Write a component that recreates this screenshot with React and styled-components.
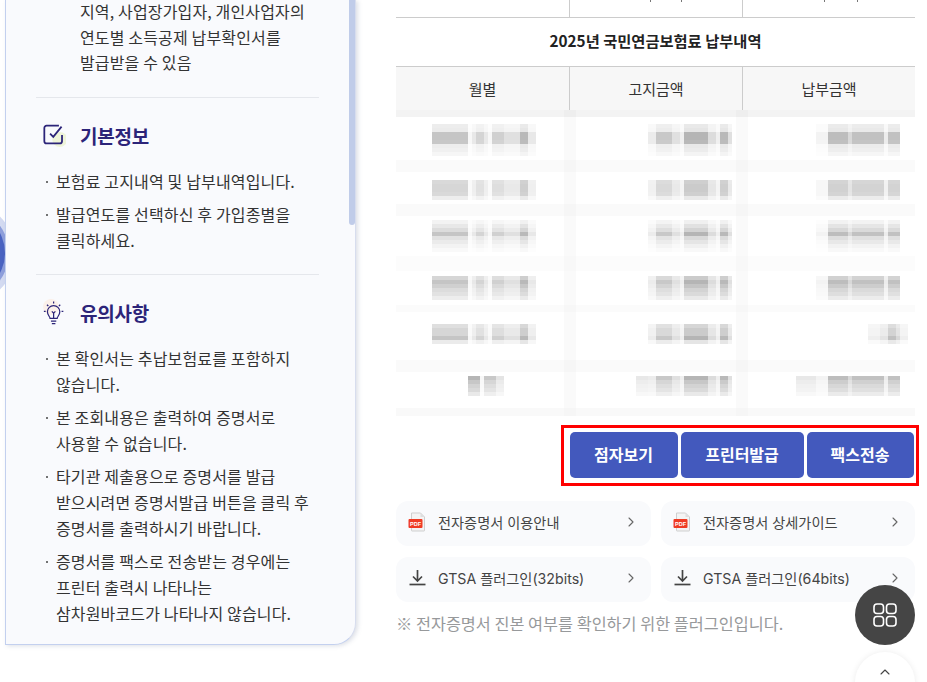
import React from "react";
import styled, { createGlobalStyle } from "styled-components";
import { ChevronRight, ChevronUp } from "lucide-react";

const GlobalStyle = createGlobalStyle`
  html, body {
    margin: 0;
    padding: 0;
    background: #fff;
  }
  body {
    font-family: "Noto Sans CJK KR", "Noto Sans", sans-serif;
    color: #333;
  }
`;

const Page = styled.div`
  position: relative;
  width: 927px;
  height: 682px;
  overflow: hidden;
  display: flex;
  align-items: flex-start;
  background: #fff;
`;

const Halo = styled.div`
  position: absolute;
  left: -79px;
  top: 211px;
  width: 84px;
  height: 84px;
  border-radius: 50%;
  background: #4a63c1;
  box-shadow: 0 0 0 4px #8d9edb, 0 0 0 10px #d3daf1;
`;

const Panel = styled.aside`
  position: relative;
  z-index: 1;
  box-sizing: border-box;
  width: 351px;
  height: 645px;
  margin-left: 5px;
  padding: 0 36px 0 30px;
  overflow: hidden;
  background: #f9fafd;
  border-left: 1px solid #c3d0ef;
  border-bottom: 1px solid #c3d0ef;
  border-right: 1px solid #d7ddee;
  border-bottom-right-radius: 22px;
  box-shadow: 2px 1px 4px rgba(120, 130, 160, 0.25);
`;

const Thumb = styled.div`
  position: absolute;
  top: 0;
  right: 0;
  width: 6px;
  height: 225px;
  background: #c0cce9;
  border-bottom-left-radius: 3px;
  border-bottom-right-radius: 3px;
`;

const Intro = styled.p`
  margin: 0;
  padding-left: 44px;
  font-size: 16px;
  line-height: 22px;
  letter-spacing: 0.15px;
`;

const IntroLine = styled.span`
  display: block;
  margin-bottom: 3.7px;
`;

const Divider = styled.hr`
  margin: ${(p) => p.$top}px 0 0;
  border: 0;
  border-top: 1px solid #e5e7ec;
`;

const Heading = styled.h3`
  display: flex;
  align-items: center;
  gap: 14px;
  height: 30px;
  margin: ${(p) => p.$top}px 0 0 7px;
  font-size: 19px;
  font-weight: 700;
  letter-spacing: -0.2px;
  color: #2c2479;
`;

const IconWrap = styled.span`
  display: flex;
  width: 23px;
  height: 26px;
`;

const Notes = styled.ul`
  list-style: none;
  margin: ${(p) => p.$top}px 0 0;
  padding: 0;
`;

const Note = styled.li`
  position: relative;
  margin-bottom: 7px;
  padding-left: 20px;
  font-size: 16px;
  line-height: 26px;
  letter-spacing: 0.15px;
  white-space: pre-line;

  &::before {
    content: "";
    position: absolute;
    left: 10px;
    top: 13px;
    width: 2px;
    height: 2px;
    border-radius: 50%;
    background: #444;
  }
`;

const Main = styled.main`
  display: flex;
  flex-direction: column;
  width: 519px;
  margin-left: 40px;
`;

const TopRow = styled.div`
  display: grid;
  grid-template-columns: 174px 173px 1fr;
  height: 17px;
  border-bottom: 1px solid #ccc;
`;

const TopCell = styled.div`
  display: flex;
  gap: ${(p) => p.$gap}px;
  padding-left: ${(p) => p.$left}px;
  border-right: ${(p) => (p.$last ? "0" : "1px solid #ccc")};
`;

const Tick = styled.span`
  width: 1px;
  height: 2px;
  background: #777;
`;

const Title = styled.h2`
  display: flex;
  align-items: center;
  justify-content: center;
  box-sizing: border-box;
  height: 48px;
  margin: 0;
  padding-bottom: 5px;
  font-size: 15.3px;
  font-weight: 700;
  color: #222;
`;

const HeadRow = styled.div`
  display: grid;
  grid-template-columns: 174px 173px 1fr;
  height: 43px;
  border-top: 1px solid #ccc;
  background: #f7f7f7;
`;

const HeadCell = styled.div`
  display: flex;
  align-items: center;
  justify-content: center;
  font-size: 15px;
  color: #333;
  border-right: ${(p) => (p.$last ? "0" : "1px solid #ccc")};
`;

const BlurRow = styled.div`
  display: grid;
  grid-template-columns: 180px 172px 1fr;
  height: ${(p) => p.$h}px;
  background: ${(p) => p.$bg || "#fff"};
`;

const BlurCell = styled.div`
  display: flex;
  align-items: flex-start;
  justify-content: ${(p) => (p.$start ? "flex-start" : "flex-end")};
  padding: ${(p) => p.$top || 0}px ${(p) => p.$right || 0}px 0 ${(p) => p.$left || 0}px;
  border-right: ${(p) => (p.$last ? "0" : `12px solid ${p.$line || "#fafafa"}`)};
`;

const ButtonBox = styled.div`
  display: flex;
  gap: 3px;
  align-self: flex-end;
  margin: 9px -4px 0 0;
  padding: 4px 2px 5px 6px;
  border: 3px solid #f00;
`;

const ActionButton = styled.button`
  width: ${(p) => p.$w}px;
  height: 46px;
  padding: 0 1px 2px 0;
  border: 0;
  border-radius: 5px;
  background: #4359bd;
  color: #fff;
  font-family: inherit;
  font-size: 16px;
  font-weight: 700;
`;

const LinkGrid = styled.div`
  display: grid;
  grid-template-columns: 255px 254px;
  gap: 11px 10px;
  margin-top: 15px;
`;

const LinkCard = styled.a`
  display: flex;
  align-items: center;
  box-sizing: border-box;
  height: 45px;
  padding: 0 12px 4px 12px;
  border-radius: 12px;
  background: #f9fafc;
  font-family: Inter, "Noto Sans CJK KR", sans-serif;
  font-size: 14.2px;
  color: #444;
`;

const LinkIcon = styled.span`
  display: flex;
  justify-content: center;
  width: 18px;
  margin-right: 12px;
`;

const LinkText = styled.span`
  flex: 1;
`;

const Footnote = styled.p`
  margin: 9px 0 0;
  height: 24px;
  font-size: 16.3px;
  line-height: 24px;
  color: #97999b;
`;

const Fab = styled.button`
  position: absolute;
  left: 855px;
  top: 585px;
  z-index: 2;
  display: flex;
  align-items: center;
  justify-content: center;
  width: 60px;
  height: 60px;
  padding: 0;
  border: 0;
  border-radius: 50%;
  background: #454545;
`;

const TopButton = styled.button`
  position: absolute;
  left: 855px;
  top: 652px;
  z-index: 2;
  display: flex;
  justify-content: center;
  width: 60px;
  height: 60px;
  padding: 12px 0 0;
  border: 0;
  border-radius: 50%;
  background: #fff;
  box-shadow: 0 0 6px rgba(0, 0, 0, 0.08);
  color: #444;
`;

const rep = (n, x) => Array(n).fill(x);

const COL1 = [...rep(9, 0.75), 0.1, 0.3, 0.55, 0.55, 0.3, 0.1, ...rep(3, 0.6), ...rep(4, 0.4), 0.9, 0.9, 0.3, 0.3];
const COL1_SHORT = [0.95, 0.95, 0.95, 0.1, 0.7, 0.7, 0.7, 0.35, 0.35];
const COL2 = [0.25, 0.25, ...rep(4, 0.7), 0.4, 0.4, 0.2, ...rep(6, 0.95), 0.45, 0.45, 0.2, 0.9, 0.9, 0.4];
const COL2_WIDE = [...rep(3, 0.3), ...COL2];
const COL3 = [...rep(3, 0.15), ...rep(5, 0.85), 0.5, ...rep(8, 0.8), 0.25, ...rep(3, 0.8), 0, 0];
const COL3_SHORT = [...rep(3, 0.2), 0.35, 0.35, 0.8, 0.8, 0.5, 0.2, 0.2];
const COL3_WIDE = [...rep(5, 0.3), ...COL3];

const ROWS = [
  { h: 43, top: 7, v: [0.3, 0.35, 1, 1, 0.95, 0.3, 0.25, 0.15], cols: [COL1, COL2, COL3] },
  { h: 32, top: 8, v: [0.65, 0.7, 0.7, 0.65, 0.3], cols: [COL1, COL2, COL3] },
  { h: 40, top: 4, v: [0.2, 0.4, 0.6, 1, 0.5, 0.35, 0.2, 0.1], cols: [COL1, COL2, COL3] },
  { h: 34, top: 5, v: [0.7, 1, 0.8, 0.6, 0.5, 0.3], cols: [COL1, COL2, COL3] },
  { h: 48, top: 12, v: [0.55, 0.7, 0.7, 1, 0.35], cols: [COL1, COL2, COL3_SHORT] },
  { h: 36, top: 4, v: [1, 0.75, 0.6, 0.5, 0.3], cols: [COL1_SHORT, COL2_WIDE, COL3_WIDE], left: 72 },
];

const BANDS = [
  { h: 12, bg: "#fafafa", line: "#f6f6f6" },
  { h: 12, bg: "#fafafa", line: "#f6f6f6" },
  { h: 15, bg: "#fcfcfc", line: "#f8f8f8" },
  { h: 7, bg: "#fbfbfb", line: "#f7f7f7" },
  { h: 12, bg: "#fafafa", line: "#f6f6f6" },
  { h: 8, bg: "#f9f9f9", line: "#f6f6f6" },
];

// the amounts are mosaicked in the picture, 4px blocks
const Mosaic = ({ h, v }) => (
  <svg width={h.length * 4} height={v.length * 4} shapeRendering="crispEdges">
    {v.map((vy, y) =>
      h.map((hx, x) => {
        const g = Math.round(255 - 78 * hx * vy);
        return <rect key={`${x}-${y}`} x={x * 4} y={y * 4} width="4" height="4" fill={`rgb(${g},${g},${g})`} />;
      })
    )}
  </svg>
);

const CheckIcon = () => (
  <svg width="26" height="26" viewBox="0 0 26 26" fill="none">
    <circle cx="19" cy="18" r="8.5" fill="#eef4d9" />
    <path d="M18 2.500H4A2.500 2.500 0 0 0 1.500 5v15A2.500 2.500 0 0 0 4 22.500h15a2.500 2.500 0 0 0 2.500-2.500v-7" stroke="#2c2479" strokeWidth="2" />
    <path d="M8 11.500l3.600 3.600L21 3.500" stroke="#2c2479" strokeWidth="2" />
  </svg>
);

const BulbIcon = () => (
  <svg width="26" height="30" viewBox="0 0 26 30" fill="none" stroke="#2c2479" strokeWidth="1.4">
    <circle cx="9" cy="7" r="9" fill="#fbf0ea" stroke="none" />
    <path d="M8 20c0-2-3-3.500-3-7.500a7 7 0 0 1 14 0c0 4-3 5.500-3 7.500z" />
    <path d="M9 23h6M10 26h4M10 12l2 2 2-2M12 14v6" />
    <path d="M12 1v2M4.500 4.500l1.500 1.500M19.500 4.500l-1.500 1.500M1 12h2M21 12h2" />
  </svg>
);

const PdfIcon = () => (
  <svg width="18" height="20" viewBox="0 0 18 20">
    <path d="M3.500 1h9l4 4v13.500a.5.5 0 0 1-.5.5H4a.5.5 0 0 1-.5-.5z" fill="#f4f4f4" stroke="#cfcfcf" />
    <path d="M12.500 1v4h4" fill="#dedede" />
    <rect x="0.500" y="7" width="14" height="9" rx="1" fill="#ef3b24" />
    <text x="7.500" y="13.500" textAnchor="middle" fontFamily="Liberation Sans, sans-serif" fontSize="5.500" fontWeight="700" fill="#fff">PDF</text>
  </svg>
);

const DownloadIcon = () => (
  <svg width="17" height="17" viewBox="0 0 17 17" fill="none" stroke="#444" strokeWidth="1.7">
    <path d="M8.500 1v10.500M4 7.500l4.500 4.500L13 7.500" />
    <path d="M0.500 15.500h16" />
  </svg>
);

const GridIcon = () => (
  <svg width="24" height="24" viewBox="0 0 24 24" fill="none" stroke="#fff" strokeWidth="1.6">
    <rect x="1" y="1" width="9.500" height="9.500" rx="3" />
    <rect x="13.500" y="1" width="9.500" height="9.500" rx="3" />
    <rect x="1" y="13.500" width="9.500" height="9.500" rx="3" />
    <rect x="13.500" y="13.500" width="9.500" height="9.500" rx="3" />
  </svg>
);

const INTRO = ["지역, 사업장가입자, 개인사업자의", "연도별 소득공제 납부확인서를", "발급받을 수 있음"];

const LINKS = [
  { icon: <PdfIcon />, label: "전자증명서 이용안내" },
  { icon: <PdfIcon />, label: "전자증명서 상세가이드" },
  { icon: <DownloadIcon />, label: "GTSA 플러그인(32bits)" },
  { icon: <DownloadIcon />, label: "GTSA 플러그인(64bits)" },
];

const App = () => (
  <Page>
    <GlobalStyle />
    <Halo />
    <Panel>
      <Thumb />
      <Intro>
        {INTRO.map((line) => (
          <IntroLine key={line}>{line}</IntroLine>
        ))}
      </Intro>
      <Divider $top={24} />
      <Heading $top={22}>
        <IconWrap><CheckIcon /></IconWrap>
        기본정보
      </Heading>
      <Notes $top={18}>
        <Note>보험료 고지내역 및 납부내역입니다.</Note>
        <Note>{"발급연도를 선택하신 후 가입종별을\n클릭하세요."}</Note>
      </Notes>
      <Divider $top={21} />
      <Heading $top={22}>
        <IconWrap><BulbIcon /></IconWrap>
        유의사항
      </Heading>
      <Notes $top={18}>
        <Note>{"본 확인서는 추납보험료를 포함하지\n않습니다."}</Note>
        <Note>{"본 조회내용은 출력하여 증명서로\n사용할 수 없습니다."}</Note>
        <Note>{"타기관 제출용으로 증명서를 발급\n받으시려면 증명서발급 버튼을 클릭 후\n증명서를 출력하시기 바랍니다."}</Note>
        <Note>{"증명서를 팩스로 전송받는 경우에는\n프린터 출력시 나타나는\n삼차원바코드가 나타나지 않습니다."}</Note>
      </Notes>
    </Panel>

    <Main>
      <TopRow>
        <TopCell />
        <TopCell $left={80} $gap={30}><Tick /><Tick /></TopCell>
        <TopCell $left={81} $gap={32} $last><Tick /><Tick /></TopCell>
      </TopRow>
      <Title>2025년 국민연금보험료 납부내역</Title>
      <HeadRow>
        <HeadCell>월별</HeadCell>
        <HeadCell>고지금액</HeadCell>
        <HeadCell $last>납부금액</HeadCell>
      </HeadRow>
      <BlurRow $h={7} $bg="#f3f3f3">
        <BlurCell $line="#eeeeee" />
        <BlurCell $line="#eeeeee" />
        <BlurCell $last />
      </BlurRow>
      {ROWS.map((row, i) => (
        <React.Fragment key={i}>
          <BlurRow $h={row.h}>
            <BlurCell $start $top={row.top} $left={row.left || 36}>
              <Mosaic h={row.cols[0]} v={row.v} />
            </BlurCell>
            <BlurCell $top={row.top} $right={4}>
              <Mosaic h={row.cols[1]} v={row.v} />
            </BlurCell>
            <BlurCell $last $top={row.top} $right={7}>
              <Mosaic h={row.cols[2]} v={row.v} />
            </BlurCell>
          </BlurRow>
          <BlurRow $h={BANDS[i].h} $bg={BANDS[i].bg}>
            <BlurCell $line={BANDS[i].line} />
            <BlurCell $line={BANDS[i].line} />
            <BlurCell $last />
          </BlurRow>
        </React.Fragment>
      ))}
      <ButtonBox>
        <ActionButton $w={108}>점자보기</ActionButton>
        <ActionButton $w={123}>프린터발급</ActionButton>
        <ActionButton $w={107}>팩스전송</ActionButton>
      </ButtonBox>
      <LinkGrid>
        {LINKS.map((link) => (
          <LinkCard key={link.label}>
            <LinkIcon>{link.icon}</LinkIcon>
            <LinkText>{link.label}</LinkText>
            <ChevronRight size={16} strokeWidth={1.6} color="#666" />
          </LinkCard>
        ))}
      </LinkGrid>
      <Footnote>※ 전자증명서 진본 여부를 확인하기 위한 플러그인입니다.</Footnote>
    </Main>

    <Fab><GridIcon /></Fab>
    <TopButton><ChevronUp size={16} strokeWidth={1.6} /></TopButton>
  </Page>
);

export default App;
